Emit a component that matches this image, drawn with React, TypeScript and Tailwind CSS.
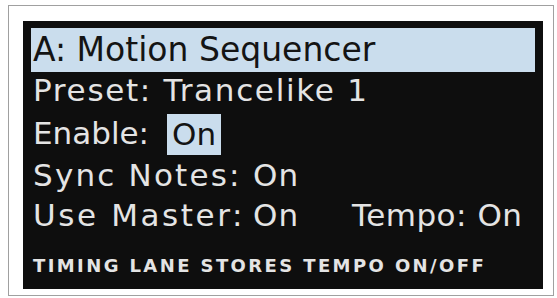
import React from "react";

export default function App() {
  const font = { fontFamily: '"DejaVu Sans", sans-serif' };
  return (
    <div className="w-[557px] h-[298px] bg-white overflow-hidden" style={font}>
      <div className="ml-[8px] mt-[5px] w-[546px] h-[291px] border border-[#a0a0a0] pl-[14px] pt-[15px] pr-[10px] pb-[6px]">
        <div className="w-full h-full bg-[#0e0e0e] pt-[7px] px-[8px] flex flex-col">
          <div className="h-[44px] bg-[#cadded] text-[#141414] text-[33px] leading-[44px] pl-[2px] whitespace-nowrap">
            A: Motion Sequencer
          </div>
          <div className="-mt-[2px] text-[#e4e4e4] text-[31px] leading-[40px] pl-[2px] whitespace-nowrap">
            <div className="tracking-[1.7px]">Preset: Trancelike 1</div>
            <div className="flex items-center">
              <span className="w-[134px]">Enable:</span>
              <span className="h-[41px] mt-[4px] px-[5px] bg-[#cadded] text-[#141414] leading-[41px]">On</span>
            </div>
            <div className="flex">
              <span className="w-[220px] tracking-[2.2px]">Sync Notes:</span>
              <span className="tracking-[1px]">On</span>
            </div>
            <div className="flex">
              <span className="w-[220px] tracking-[2.6px]">Use Master:</span>
              <span className="w-[99px] tracking-[1px]">On</span>
              <span className="tracking-[0.5px]">Tempo: On</span>
            </div>
          </div>
          <div className="mt-[21px] pl-[2px] text-[#e4e4e4] text-[18px] leading-[20px] font-bold tracking-[2.4px] whitespace-nowrap">
            TIMING LANE STORES TEMPO ON/OFF
          </div>
        </div>
      </div>
    </div>
  );
}
